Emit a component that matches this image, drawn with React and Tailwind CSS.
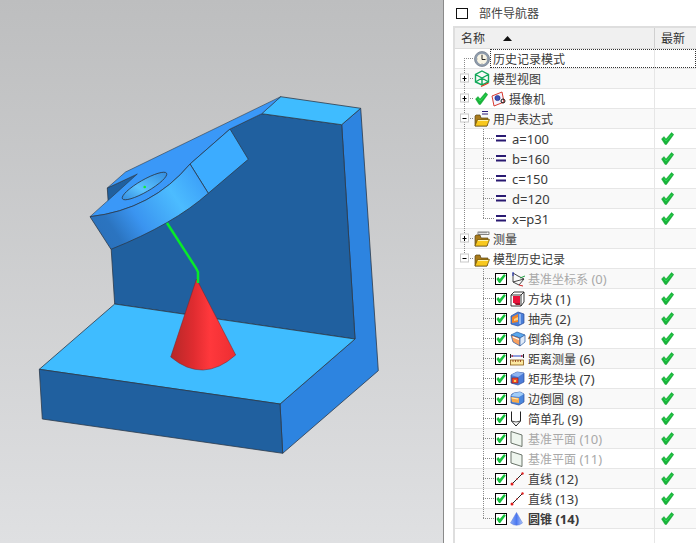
const CJK = '"Noto Sans CJK SC", sans-serif';

function Check({ className = '' }) {
  return (
    <svg width="13" height="13" viewBox="0 0 13 13" className={className}>
      <path d="M0.5 7 L3 4.5 L5 7 L10.5 0.5 L12.8 2.5 L5.5 12.5 L4 12.5 Z" fill="#18b53a" stroke="#0d9a2c" strokeWidth="0.4" />
      <path d="M3 6.5 L5 9 L11 2.5" fill="none" stroke="#2ddc55" strokeWidth="1" />
    </svg>
  );
}

function Box() {
  return (
    <span className="w-3 h-3 border border-black bg-white flex items-center justify-center shrink-0">
      <svg width="11" height="11" viewBox="0 0 13 13">
        <path d="M0.5 7 L3 4.5 L5 7 L10.5 0.5 L12.8 2.5 L5.5 12.5 L4 12.5 Z" fill="#14c43c" />
      </svg>
    </span>
  );
}

function Folder({ top }) {
  return (
    <svg width="16" height="18" viewBox="0 0 16 18" className="shrink-0">
      <path d="M1 6 L1 16 L13 16 L14 8 L7 8 L6 5 L2 5 Z" fill="#a87a1c" stroke="#5a4510" strokeWidth="0.7" />
      <path d="M1 16 L3.5 9.5 L15.5 9.5 L13 16 Z" fill="#f8c81e" stroke="#6a5010" strokeWidth="0.7" />
      <path d="M4 10.5 L14 10.5" stroke="#fff2a8" strokeWidth="1" />
      {top === 'eq' && <path d="M8 1.5 H14 M8 4 H14" stroke="#2a1a7a" strokeWidth="1" />}
      {top === 'ruler' && (
        <g>
          <rect x="4" y="2" width="11" height="2.5" fill="#fff" stroke="#333" strokeWidth="0.6" />
          <path d="M6 2 V3.5 M8 2 V3.5 M10 2 V3.5 M12 2 V3.5" stroke="#333" strokeWidth="0.6" />
        </g>
      )}
    </svg>
  );
}

const Clock = () => (
  <svg width="16" height="16" viewBox="0 0 16 16" className="shrink-0">
    <circle cx="8" cy="8" r="7.5" fill="#8e9bab" stroke="#76828f" strokeWidth="0.8" />
    <circle cx="8" cy="8" r="5.2" fill="#f8f4e4" />
    <path d="M8 4 V8.5 H11.5" fill="none" stroke="#222" strokeWidth="1" />
    <path d="M8 3 V3.6 M8 12.4 V13 M3 8 H3.6 M12.4 8 H13" stroke="#666" strokeWidth="0.7" />
  </svg>
);

const ModelView = () => (
  <svg width="16" height="18" viewBox="0 0 16 18" className="shrink-0">
    <path d="M8 1 L14.5 4.5 V12 L8 15 L1.5 12 V4.5 Z M1.5 4.5 L8 8 L14.5 4.5 M8 8 V15 M1.5 12 L8 8 M14.5 12 L8 8" fill="none" stroke="#10a858" strokeWidth="1.4" />
    <path d="M7 16.5 L14.5 13" stroke="#e03a20" strokeWidth="1.3" />
  </svg>
);

const Camera = () => (
  <svg width="15" height="16" viewBox="0 0 15 16" className="shrink-0">
    <path d="M1 5 L11 1 L13 11 L3 15 Z" fill="#f4f4ff" stroke="#d83a30" strokeWidth="1" />
    <circle cx="6.5" cy="7" r="2.6" fill="#3c50b8" stroke="#1a2478" strokeWidth="0.6" />
    <circle cx="12" cy="10" r="2" fill="none" stroke="#111" strokeWidth="1" />
  </svg>
);

const Eq = () => (
  <svg width="10" height="7" viewBox="0 0 10 7" className="shrink-0">
    <rect width="10" height="2" fill="#2a1a72" />
    <rect y="4.5" width="10" height="2" fill="#2a1a72" />
  </svg>
);

const IconDatum = () => (
  <svg width="15" height="16" viewBox="0 0 15 16" className="shrink-0">
    <path d="M3 2 V11 L9 14 L14 8 L8 5 Z M3 11 L14 8" fill="none" stroke="#333" strokeWidth="0.9" />
    <path d="M3 5 V1" stroke="#2030c0" strokeWidth="1" />
    <path d="M9 14 L13 15" stroke="#d02020" strokeWidth="1" />
    <path d="M10 7 L15 5" stroke="#20a040" strokeWidth="1" />
  </svg>
);

const IconBlock = () => (
  <svg width="15" height="16" viewBox="0 0 15 16" className="shrink-0">
    <path d="M1 4 L4 1 H14 V11 L11 15 H1 Z M1 4 H11 V15 M11 4 L14 1" fill="#fff" stroke="#222" strokeWidth="0.9" />
    <rect x="3" y="5" width="7" height="7" fill="#e8123a" />
    <path d="M4 12 L6 14 H10 V12 Z" fill="#a01028" />
  </svg>
);

const IconShell = () => (
  <svg width="15" height="16" viewBox="0 0 15 16" className="shrink-0">
    <path d="M1 5 L8 1 L14 3 V12 L8 15 L1 13 Z" fill="#4a7ed8" stroke="#2a4a98" strokeWidth="0.7" />
    <path d="M2 6 L8 3 V11 L2 12 Z" fill="#f08428" />
    <path d="M4 8 L8 6 V9 L4 10 Z" fill="#ffd080" />
    <path d="M10 3 V13" stroke="#a8c8f8" strokeWidth="1.5" />
  </svg>
);

const IconChamfer = () => (
  <svg width="16" height="16" viewBox="0 0 16 16" className="shrink-0">
    <path d="M1 4 L7 1 L15 4 L10 7 Z" fill="#5aa8ee" stroke="#2a5aa0" strokeWidth="0.7" />
    <path d="M1 4 L10 7 V15 L3 11 Z" fill="#f8a060" stroke="#2a5aa0" strokeWidth="0.7" />
    <path d="M10 7 L15 4 V11 L10 15 Z" fill="#dfeaf8" stroke="#2a5aa0" strokeWidth="0.7" />
    <path d="M3 6 L9 8.5" stroke="#fff" strokeWidth="1.2" />
  </svg>
);

const IconMeasure = () => (
  <svg width="14" height="14" viewBox="0 0 14 14" className="shrink-0">
    <path d="M0.5 2 V6 M13.5 2 V6" stroke="#222" strokeWidth="1" />
    <path d="M1 4 H13" stroke="#2040c0" strokeWidth="1" />
    <path d="M1 4 L3 3 V5 Z M13 4 L11 3 V5 Z" fill="#d02020" />
    <rect x="0.5" y="8" width="13" height="5" fill="#fce8a0" stroke="#8a5a10" strokeWidth="0.8" />
    <path d="M3 8 V10 M5.5 8 V10 M8 8 V10 M10.5 8 V10" stroke="#8a3010" strokeWidth="0.8" />
  </svg>
);

const IconPad = () => (
  <svg width="15" height="15" viewBox="0 0 15 15" className="shrink-0">
    <path d="M1 4 L7 1 L14 2 V11 L8 14 L1 12 Z" fill="#4c7cd8" stroke="#2a4a98" strokeWidth="0.7" />
    <path d="M1 4 L8 6 L14 2 L7 1 Z" fill="#90b4f0" />
    <rect x="2" y="7" width="6" height="5" fill="#f05030" stroke="#901010" strokeWidth="0.6" />
    <rect x="4" y="9" width="2" height="2" fill="#ffd050" />
  </svg>
);

const IconBlend = () => (
  <svg width="15" height="15" viewBox="0 0 15 15" className="shrink-0">
    <path d="M1 5 Q1 3 4 2 L10 1 L14 3 V11 L9 14 L1 12 Z" fill="#4a86dc" stroke="#2a4a98" strokeWidth="0.7" />
    <path d="M1 5 L9 6 L14 3 L10 1 L4 2 Z" fill="#a0ccf8" />
    <path d="M1 6 L9 7 V12 L2 11 Z" fill="#f8a848" />
    <path d="M2 7 L8 8" stroke="#ffe8b0" strokeWidth="1.2" />
  </svg>
);

const IconHole = () => (
  <svg width="12" height="16" viewBox="0 0 12 16" className="shrink-0">
    <path d="M1.5 0.5 V10 L6 15 L10.5 10 V0.5" fill="none" stroke="#222" strokeWidth="1" />
    <path d="M1.5 10 Q6 12 10.5 10" fill="none" stroke="#222" strokeWidth="0.8" />
  </svg>
);

const IconPlane = () => (
  <svg width="13" height="16" viewBox="0 0 13 16" className="shrink-0">
    <path d="M1 0.5 L12 4 V15.5 L1 12 Z" fill="#eef5ee" stroke="#6a746a" strokeWidth="1" />
  </svg>
);

const IconLine = () => (
  <svg width="14" height="14" viewBox="0 0 14 14" className="shrink-0">
    <path d="M1.5 12.5 L12.5 1.5" stroke="#222" strokeWidth="1" />
    <circle cx="2" cy="12" r="1.5" fill="#e02020" />
    <circle cx="12.5" cy="1.5" r="1.2" fill="#e02020" />
    <circle cx="7" cy="7" r="0.8" fill="#e02020" />
  </svg>
);

const IconCone = () => (
  <svg width="13" height="14" viewBox="0 0 13 14" className="shrink-0">
    <defs>
      <linearGradient id="ic" x1="0" x2="1" y1="0" y2="0">
        <stop offset="0" stopColor="#8aaef8" />
        <stop offset="0.5" stopColor="#4c78f0" />
        <stop offset="1" stopColor="#b0c8fa" />
      </linearGradient>
    </defs>
    <path d="M6.5 0.5 L12.5 11 Q6.5 15.5 0.5 11 Z" fill="url(#ic)" stroke="#5a7ad8" strokeWidth="0.5" />
  </svg>
);

function Label({ cn, en, gray, bold }) {
  return (
    <span className={`whitespace-pre -translate-y-px inline-block ${gray ? 'text-[#a9a9a9]' : 'text-[#3a3a3a]'} ${bold ? 'font-bold' : ''}`}>
      {cn && <span className="text-[12px]" style={{ fontFamily: CJK }}>{cn}</span>}
      {en && <span className="text-[13px]" style={{ fontFamily: '"Noto Sans", sans-serif' }}>{en}</span>}
    </span>
  );
}

function Row({ i, last, children }) {
  return (
    <div className={`flex h-5 border-b border-[#e6e6e6] ${i % 2 ? 'bg-[#f9f9f9]' : 'bg-white'}`}>
      <div className="w-[200px] border-r border-[#e6e6e6] flex items-center relative shrink-0">{children}</div>
      <div className="flex-1 flex items-center pl-[6px]">{last && <Check />}</div>
    </div>
  );
}

const exprs = ['a=100', 'b=160', 'c=150', 'd=120', 'x=p31'];
const feats = [
  [IconDatum, '基准坐标系', ' (0)', true],
  [IconBlock, '方块', ' (1)'],
  [IconShell, '抽壳', ' (2)'],
  [IconChamfer, '倒斜角', ' (3)'],
  [IconMeasure, '距离测量', ' (6)'],
  [IconPad, '矩形垫块', ' (7)'],
  [IconBlend, '边倒圆', ' (8)'],
  [IconHole, '简单孔', ' (9)'],
  [IconPlane, '基准平面', ' (10)', true],
  [IconPlane, '基准平面', ' (11)', true],
  [IconLine, '直线', ' (12)'],
  [IconLine, '直线', ' (13)'],
  [IconCone, '圆锥', ' (14)', false, true],
];

function Level0({ i, Icon, text }) {
  return (
    <Row i={i}>
      <div className="w-[35px] shrink-0 pl-[19px] flex justify-start">{Icon}</div>
      <span className="ml-[3px]"><Label cn={text} /></span>
    </Row>
  );
}

function TreeLines() {
  const zero = [59, 79, 99, 119, 239, 259];
  const h1a = [139, 159, 179, 199, 219];
  const h1b = Array.from({ length: 13 }, (_, k) => 279 + k * 20);
  const boxes = [[79, '+'], [99, '+'], [119, '-'], [239, '+'], [259, '-']];
  return (
    <svg className="absolute left-0 top-0" width="252" height="543" viewBox="444 0 252 543">
      <g stroke="#8a8a8a" strokeWidth="1" strokeDasharray="1 1" fill="none">
        <path d="M464.5 58 V259" />
        {zero.map((y) => <path key={y} d={`M464 ${y - 0.5} H474`} />)}
        <path d="M483.5 129 V219" />
        {h1a.map((y) => <path key={y} d={`M483 ${y - 0.5} H494`} />)}
        <path d="M483.5 269 V519" />
        {h1b.map((y) => <path key={y} d={`M483 ${y - 0.5} H494`} />)}
      </g>
      {boxes.map(([y, s]) => (
        <g key={y}>
          <rect x="460.5" y={y - 5} width="8" height="8" fill="#fff" stroke="#c9c9c9" />
          <path d={`M462.5 ${y - 0.5} H466.5`} stroke="#000" />
          {s === '+' && <path d={`M464.5 ${y - 3} V${y + 2}`} stroke="#000" />}
        </g>
      ))}
    </svg>
  );
}

function Model() {
  return (
    <svg width="443" height="543" viewBox="0 0 443 543" className="block">
      <defs>
        <linearGradient id="disc" gradientUnits="userSpaceOnUse" x1="95" y1="250" x2="205" y2="175">
          <stop offset="0" stopColor="#2a70ba" />
          <stop offset="0.2" stopColor="#2b74c0" />
          <stop offset="0.4" stopColor="#3a94f0" />
          <stop offset="0.72" stopColor="#4cbcff" />
          <stop offset="1" stopColor="#3a9cf8" />
        </linearGradient>
        <linearGradient id="cone" gradientUnits="userSpaceOnUse" x1="171" y1="0" x2="236" y2="0">
          <stop offset="0" stopColor="#b62828" />
          <stop offset="0.35" stopColor="#e02c30" />
          <stop offset="0.6" stopColor="#ff383c" />
          <stop offset="1" stopColor="#ec2e32" />
        </linearGradient>
        <linearGradient id="hole" gradientUnits="userSpaceOnUse" x1="122" y1="198" x2="168" y2="173">
          <stop offset="0" stopColor="#2f86dc" />
          <stop offset="0.4" stopColor="#5cc4ff" />
          <stop offset="1" stopColor="#2f86dc" />
        </linearGradient>
      </defs>
      <g stroke="#2c3a4a" strokeWidth="0.8" strokeLinejoin="round">
        <polygon points="360.7,108.3 378.3,370.7 282.7,453.3 280,404 355,339 341.7,124.7" fill="#2d84e0" />
        <polygon points="261.7,113.7 341.7,124.7 355,339 114.7,304 107.3,188 137.3,174" fill="#20609f" />
        <polygon points="280.7,96.7 360.7,108.3 341.7,124.7 261.7,113.7" fill="#3fbcff" />
        <polygon points="114.7,304 355,339 280,404 39.3,369.3" fill="#3fbcff" />
        <polygon points="39.3,369.3 280,404 282.7,453.3 42.3,419" fill="#20609f" />
        <path d="M90 216.7 L137.3 174 L107.3 188 L125.5 172 L280.7 96.7 L261.7 113.7 L230 129 L190 164 Q152 209.6 90 216.7 Z" fill="#3a98f8" strokeWidth="0.6" />
        <polygon points="190,164 230,129 248.3,159.3 208.3,193.3" fill="#3cacff" />
        <path d="M90 216.7 Q152 209.6 190 164 L208.3 193.3 Q173.8 224.1 111 249.3 Z" fill="url(#disc)" />
        <ellipse cx="144.5" cy="186" rx="25.5" ry="6" transform="rotate(-30 144.5 186)" fill="url(#hole)" />
      </g>
      <circle cx="144.7" cy="187" r="1.3" fill="#10ee30" />
      <path d="M196.5 279 L170.7 357 Q203 384 235.7 355 Z" fill="url(#cone)" stroke="#7a2020" strokeWidth="0.5" />
      <path d="M167 223 L196 268 L198 272 L198 283" fill="none" stroke="#08ea2a" strokeWidth="2.5" />
    </svg>
  );
}

export default function App() {
  return (
    <div className="w-[696px] h-[543px] flex overflow-hidden bg-white">
      <div className="w-[443px] h-full shrink-0 bg-linear-to-b from-[#bdbebf] to-[#dfe0e2]">
        <Model />
      </div>
      <div className="w-px h-full bg-[#8a8a8a] shrink-0" />
      <div className="relative flex-1 h-full flex flex-col bg-white">
        <div className="h-[26px] flex items-center pl-3 shrink-0">
          <span className="w-3 h-[11px] border-[1.5px] border-[#111] bg-white" />
          <span className="ml-[11px] text-[12px] text-[#444]" style={{ fontFamily: CJK }}>部件导航器</span>
        </div>
        <div className="ml-[9px] flex-1 border-l-2 border-t-2 border-[#dedede] flex flex-col">
          <div className="flex h-[21px] bg-[#f0f0f0] border-b border-[#dcdcdc] shrink-0">
            <div className="w-[200px] border-r border-[#d0d0d0] flex items-center pl-[6px] shrink-0">
              <span className="text-[12px] text-[#333]" style={{ fontFamily: CJK }}>名称</span>
              <svg width="9" height="5" viewBox="0 0 9 5" className="ml-[18px]"><path d="M4.5 0 L9 5 H0 Z" fill="#111" /></svg>
            </div>
            <div className="flex-1 flex items-center pl-[6px] text-[12px] text-[#333]" style={{ fontFamily: CJK }}>最新</div>
          </div>
          <Row i={0}>
            <div className="w-[35px] shrink-0 pl-[19px]"><Clock /></div>
            <span className="ml-[1px] pl-[2px] flex-1 h-full flex items-center"><Label cn="历史记录模式" /></span>
          </Row>
          <Level0 i={1} Icon={<ModelView />} text="模型视图" />
          <Row i={2}>
            <div className="shrink-0 pl-[20px] flex items-center">
              <Check />
              <span className="ml-[3px]"><Camera /></span>
            </div>
            <span className="ml-[3px]"><Label cn="摄像机" /></span>
          </Row>
          <Level0 i={3} Icon={<Folder top="eq" />} text="用户表达式" />
          {exprs.map((e, k) => (
            <Row key={e} i={4 + k} last>
              <div className="pl-[41px] shrink-0"><Eq /></div>
              <span className="ml-[6px]"><Label en={e} /></span>
            </Row>
          ))}
          <Level0 i={9} Icon={<Folder top="ruler" />} text="测量" />
          <Level0 i={10} Icon={<Folder />} text="模型历史记录" />
          {feats.map(([Icon, cn, en, gray, bold], k) => (
            <Row key={cn + en} i={11 + k} last>
              <div className="pl-[40px] shrink-0 flex items-center">
                <Box />
                <div className="ml-[3px] w-[18px] flex justify-start"><Icon /></div>
              </div>
              <Label cn={cn} en={en} gray={gray} bold={bold} />
            </Row>
          ))}
          <div className="flex-1 flex">
            <div className="w-[200px] border-r border-[#e6e6e6]" />
          </div>
        </div>
        <TreeLines />
        <div className="absolute left-[46px] right-0 top-[49px] h-[19px] border border-dotted border-[#333] pointer-events-none" />
      </div>
    </div>
  );
}
